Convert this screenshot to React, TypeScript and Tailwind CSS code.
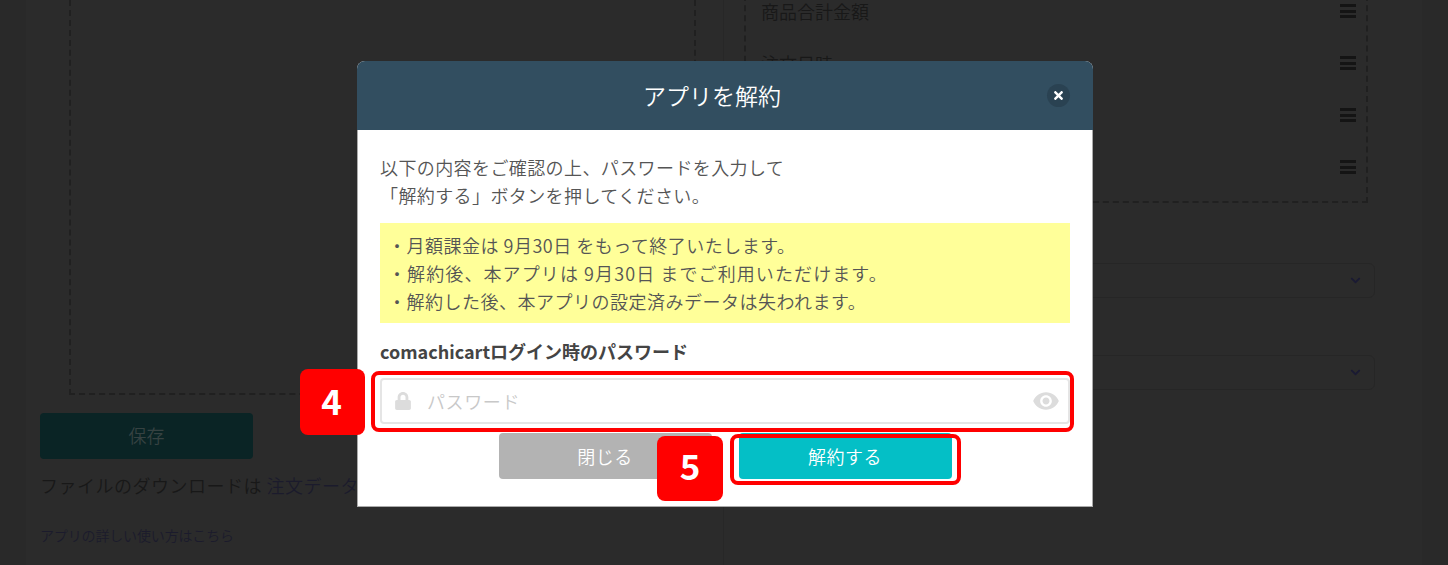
import { FaChevronDown, FaLock, FaTimes } from 'react-icons/fa';
import { MdVisibility } from 'react-icons/md';

const font = { fontFamily: '"Noto Sans CJK JP", "Noto Sans", sans-serif' };

const Bars = () => (
  <div className="flex w-4 flex-col gap-[2.5px]">
    <div className="h-[3px] bg-[#141414]" />
    <div className="h-[3px] bg-[#141414]" />
    <div className="h-[3px] bg-[#141414]" />
  </div>
);

const rows = ['商品合計金額', '注文日時', '', ''];

const DarkSelect = () => (
  <div className="flex h-[35px] items-center justify-end rounded-md border border-[#262626] pr-[13px]">
    <FaChevronDown className="h-[11px] w-[11px] text-[#1a1a33]" />
  </div>
);

export default function App() {
  return (
    <div
      className="relative h-[565px] w-[1448px] overflow-hidden bg-[#292929] font-[350]"
      style={font}
    >
      {/* Page behind the overlay */}
      <div className="mx-[26px] flex h-full bg-[#2b2b2b]">
        <div className="w-[698px] border-r border-[#272727] pl-[14px]">
          <div className="ml-[29px] h-[395px] w-[627px] border-x-2 border-b-2 border-dashed border-[#202020]" />
          <div className="mt-[18px] flex h-[46px] w-[213px] items-center justify-center rounded bg-[#0a2425] pb-[2px] text-lg text-[#364242]">
            保存
          </div>
          <div className="mt-[12px] text-lg tracking-[0.5px] whitespace-nowrap text-[#181818]">
            ファイルのダウンロードは <span className="text-[#1b1b2c]">注文データ</span>
          </div>
          <div className="mt-[26px] text-sm tracking-[-0.15px] text-[#1b1b2c]">アプリの詳しい使い方はこちら</div>
        </div>
        <div className="flex-1 pl-5">
          <div className="-mt-[15px] w-[624px] border-x-2 border-b-2 border-dashed border-[#202020] pb-[8px]">
            {rows.map((label, i) => (
              <div key={i} className="flex h-[52px] items-center justify-between pr-[10px] pl-[15px] text-lg leading-[18px] text-[#181818]">
                <span>{label}</span>
                <Bars />
              </div>
            ))}
          </div>
          <div className="mt-[60px] w-[631px]">
            <DarkSelect />
            <div className="mt-[57px]">
              <DarkSelect />
            </div>
          </div>
        </div>
      </div>

      {/* Modal */}
      <div className="absolute top-[61px] left-[357px] w-[736px] overflow-hidden rounded-t-lg bg-white text-[#555]">
        <div className="relative flex h-[69px] items-center justify-center bg-[#324e60] pr-[26px] text-[23px] text-white">
          アプリを解約
          <div className="absolute top-[23px] right-[23px] flex h-[23px] w-[23px] items-center justify-center rounded-full bg-[#2a4252]">
            <FaTimes className="h-[13px] w-[13px] text-white" />
          </div>
        </div>
        <div className="h-[377px] border-x border-b border-[#aaa] px-[22px] pt-[23px]">
          <p className="text-lg leading-[28px] tracking-[0.4px]">
            以下の内容をご確認の上、パスワードを入力して
            <br />
            「解約する」ボタンを押してください。
          </p>
          <div className="mt-[14px] h-[100px] bg-[#ffff99] px-2 pt-[8px] text-lg leading-[28px]">
            <p className="tracking-[0.5px]">・月額課金は 9月30日 をもって終了いたします。</p>
            <p className="tracking-[1.1px]">・解約後、本アプリは 9月30日 までご利用いただけます。</p>
            <p className="tracking-[0.5px]">・解約した後、本アプリの設定済みデータは失われます。</p>
          </div>
          <div className="mt-[14px] text-lg leading-[28px] font-bold text-[#444]">comachicartログイン時のパスワード</div>
          <div className="mt-[13px] flex h-[46px] items-center rounded border-2 border-[#e5e5e5] pr-[8px] pl-[12px]">
            <FaLock className="h-[18px] w-[18px] text-[#dcdcdc]" />
            <span className="ml-[15px] flex-1 text-lg tracking-[0.6px] text-[#c8c8c8]">パスワード</span>
            <MdVisibility className="h-[28px] w-[28px] text-[#dcdcdc]" />
          </div>
          <div className="mt-[9px] flex justify-center gap-[27px] text-lg tracking-[0.5px] text-white">
            <div className="flex h-[46px] w-[213px] items-center justify-center rounded bg-[#b3b3b3]">閉じる</div>
            <div className="flex h-[46px] w-[213px] items-center justify-center rounded bg-[#04bfc6]">解約する</div>
          </div>
        </div>
      </div>

      {/* Annotations */}
      <div className="absolute top-[371px] left-[371px] h-[61px] w-[703px] rounded-lg border-[4px] border-[#ff0000]" />
      <div className="absolute top-[434px] left-[730px] h-[51px] w-[231px] rounded-lg border-[4px] border-[#ff0000]" />
      <div className="absolute top-[369px] left-[300px] flex h-[66px] w-[65px] items-center justify-center rounded-lg bg-[#ff0000] pr-[2px] pb-[4px] text-[35px] font-bold text-white">
        4
      </div>
      <div className="absolute top-[436px] left-[657px] flex h-[65px] w-[66px] items-center justify-center rounded-lg bg-[#ff0000] pb-[6px] text-[35px] font-bold text-white">
        5
      </div>
    </div>
  );
}
